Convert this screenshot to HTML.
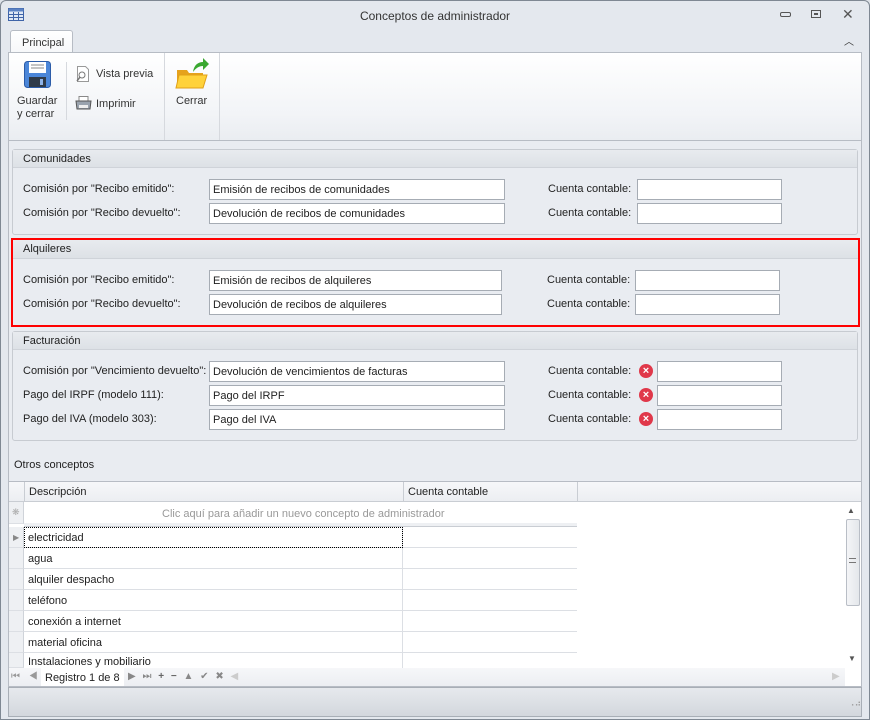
<!DOCTYPE html><html><head><meta charset="utf-8"><style>
*{margin:0;padding:0;box-sizing:border-box}
body{width:870px;height:720px;background:#dfe3e9;font-family:"Liberation Sans",sans-serif;font-size:11px;color:#1e1e1e;position:relative;overflow:hidden}
.a{position:absolute}
.win{left:0;top:0;width:870px;height:720px;border:1px solid #7f8893;border-radius:6px 6px 0 0;background:#e4e8ee}
.inp{position:absolute;height:21px;background:#fff;border:1px solid #a6acb4;padding:4px 0 0 3px;white-space:nowrap}
.lbl{position:absolute;white-space:nowrap;color:#222}
.grp{position:absolute;border:1px solid #c7cbd1;border-radius:3px;background:#e9ecf1}
.gh{position:absolute;left:0;right:0;top:0;height:18px;background:linear-gradient(#e8ebef,#dde1e6);border-bottom:1px solid #cfd3d9;padding:3px 0 0 10px}
.err{position:absolute;width:14px;height:14px;border-radius:50%;background:#e0384a;color:#fff;font-size:11px;line-height:14px;text-align:center;font-weight:bold}
.row{position:absolute;left:24px;width:553px;height:21px;border-bottom:1px solid #dcdfe4;background:#fff}
.row span{position:absolute;left:4px;top:5px}
.row i{position:absolute;left:378px;top:0;bottom:0;border-left:1px solid #dcdfe4}
.ind{position:absolute;left:9px;width:15px;height:21px;border-bottom:1px solid #dcdfe4;border-right:1px solid #cfd3d9;background:#eef0f3}
</style></head><body>
<div class="a win"></div>
<svg class="a" style="left:8px;top:8px" width="16" height="13"><rect x="0.5" y="0.5" width="15" height="12" fill="#dfe8f5" stroke="#3f64a8"/><rect x="0.5" y="0.5" width="15" height="3" fill="#5b82c4"/><path d="M5.5 4v9M10.5 4v9M1 6.5h14M1 9.5h14" stroke="#3f64a8"/></svg>
<div class="a" style="left:0;width:870px;top:9px;text-align:center;color:#333;font-size:12px">Conceptos de administrador</div>
<div class="a" style="left:780px;top:12px;width:11px;height:5px;border:1px solid #555;border-radius:2px"></div>
<div class="a" style="left:811px;top:10px;width:10px;height:8px;border:1px solid #555"></div>
<div class="a" style="left:814px;top:13px;width:4px;height:2px;border:1px solid #555"></div>
<div class="a" style="left:842px;top:6px;font-size:14px;color:#555">✕</div>
<div class="a" style="left:844px;top:33px;font-size:10px;color:#333">︿</div>
<div class="a" style="left:10px;top:30px;width:63px;height:23px;background:linear-gradient(#fff,#f6f7f9);border:1px solid #b7bcc4;border-bottom:none;border-radius:3px 3px 0 0;padding:6px 0 0 11px;color:#333">Principal</div>
<div class="a" style="left:8px;top:52px;width:854px;height:89px;background:linear-gradient(#fff,#f2f4f7 70%,#eaedf1);border:1px solid #b7bcc4"></div>
<div class="a" style="left:66px;top:62px;width:1px;height:58px;background:#d6d9de"></div>
<div class="a" style="left:164px;top:53px;width:1px;height:87px;background:#d6d9de"></div>
<div class="a" style="left:219px;top:53px;width:1px;height:87px;background:#d6d9de"></div>
<svg class="a" style="left:24px;top:61px" width="27" height="27"><rect x="0.5" y="0.5" width="26" height="26" rx="3" fill="#4b86d8" stroke="#2c5ca8"/><rect x="5" y="1" width="17" height="11" fill="#fff"/><path d="M7 4h13M7 7h13" stroke="#888"/><rect x="5" y="16" width="17" height="10" fill="#2f3a48"/><rect x="16" y="18" width="3" height="6" fill="#8fb4e8"/></svg>
<div class="a" style="left:17px;top:95px;color:#333;line-height:13px">Guardar<br>y cerrar</div>
<svg class="a" style="left:76px;top:66px" width="14" height="16"><path d="M1.5 .5h8l3 3v12h-11z" fill="#fff" stroke="#999"/><circle cx="6" cy="9" r="3" fill="none" stroke="#777"/><path d="M4 11l-3 4" stroke="#777" stroke-width="1.5"/></svg>
<div class="a" style="left:96px;top:68px;color:#333">Vista previa</div>
<svg class="a" style="left:75px;top:96px" width="17" height="14"><rect x="4" y="0.5" width="9" height="5" fill="#fff" stroke="#888"/><path d="M1 5h15l-1 8H2z" fill="#9aa3ae" stroke="#555"/><rect x="4" y="9" width="9" height="3" fill="#eee"/></svg>
<div class="a" style="left:96px;top:98px;color:#333">Imprimir</div>
<svg class="a" style="left:175px;top:58px" width="34" height="32"><path d="M2 12h10l2 3h14v15H2z" fill="#e6a21c"/><path d="M4 17h28l-4 13H1z" fill="#ffd23a" stroke="#e0a018"/><path d="M18 14c1-7 5-10 10-10V0l6 6-6 6V8c-4 0-7 2-10 6z" fill="#3aa831"/></svg>
<div class="a" style="left:176px;top:95px;color:#333">Cerrar</div>
<div class="a" style="left:8px;top:141px;width:854px;height:546px;background:#e9ecf1;border-left:1px solid #b7bcc4;border-right:1px solid #b7bcc4"></div>
<div class="grp" style="left:12px;top:149px;width:846px;height:86px"><div class="gh">Comunidades</div></div>
<div class="lbl" style="left:23px;top:183px">Comisión por "Recibo emitido":</div>
<div class="inp" style="left:209px;top:179px;width:296px">Emisión de recibos de comunidades</div>
<div class="lbl" style="left:548px;top:183px">Cuenta contable:</div>
<div class="inp" style="left:637px;top:179px;width:145px"></div>
<div class="lbl" style="left:23px;top:207px">Comisión por "Recibo devuelto":</div>
<div class="inp" style="left:209px;top:203px;width:296px">Devolución de recibos de comunidades</div>
<div class="lbl" style="left:548px;top:207px">Cuenta contable:</div>
<div class="inp" style="left:637px;top:203px;width:145px"></div>
<div class="grp" style="left:11px;top:238px;width:849px;height:89px;border:2px solid #f00;border-radius:0"><div class="gh" style="top:0;height:19px">Alquileres</div></div>
<div class="lbl" style="left:23px;top:274px">Comisión por "Recibo emitido":</div>
<div class="inp" style="left:209px;top:270px;width:293px">Emisión de recibos de alquileres</div>
<div class="lbl" style="left:547px;top:274px">Cuenta contable:</div>
<div class="inp" style="left:635px;top:270px;width:145px"></div>
<div class="lbl" style="left:23px;top:298px">Comisión por "Recibo devuelto":</div>
<div class="inp" style="left:209px;top:294px;width:293px">Devolución de recibos de alquileres</div>
<div class="lbl" style="left:547px;top:298px">Cuenta contable:</div>
<div class="inp" style="left:635px;top:294px;width:145px"></div>
<div class="grp" style="left:12px;top:331px;width:846px;height:110px"><div class="gh">Facturación</div></div>
<div class="lbl" style="left:23px;top:365px">Comisión por "Vencimiento devuelto":</div>
<div class="inp" style="left:209px;top:361px;width:296px">Devolución de vencimientos de facturas</div>
<div class="lbl" style="left:548px;top:365px">Cuenta contable:</div>
<div class="err" style="left:639px;top:364px">×</div>
<div class="inp" style="left:657px;top:361px;width:125px"></div>
<div class="lbl" style="left:23px;top:389px">Pago del IRPF (modelo 111):</div>
<div class="inp" style="left:209px;top:385px;width:296px">Pago del IRPF</div>
<div class="lbl" style="left:548px;top:389px">Cuenta contable:</div>
<div class="err" style="left:639px;top:388px">×</div>
<div class="inp" style="left:657px;top:385px;width:125px"></div>
<div class="lbl" style="left:23px;top:413px">Pago del IVA (modelo 303):</div>
<div class="inp" style="left:209px;top:409px;width:296px">Pago del IVA</div>
<div class="lbl" style="left:548px;top:413px">Cuenta contable:</div>
<div class="err" style="left:639px;top:412px">×</div>
<div class="inp" style="left:657px;top:409px;width:125px"></div>
<div class="lbl" style="left:14px;top:459px">Otros conceptos</div>
<div class="a" style="left:8px;top:481px;width:854px;height:206px;background:#fff;border:1px solid #b7bcc4"></div>
<div class="a" style="left:9px;top:482px;width:852px;height:20px;background:linear-gradient(#f6f7f9,#eceef2);border-bottom:1px solid #c9cdd3"></div>
<div class="a" style="left:24px;top:482px;width:1px;height:20px;background:#c9cdd3"></div>
<div class="a" style="left:403px;top:482px;width:1px;height:20px;background:#c9cdd3"></div>
<div class="a" style="left:577px;top:482px;width:1px;height:20px;background:#c9cdd3"></div>
<div class="lbl" style="left:29px;top:486px">Descripción</div>
<div class="lbl" style="left:408px;top:486px">Cuenta contable</div>
<div class="ind" style="top:502px;height:22px;color:#aaa;font-size:9px;padding:5px 0 0 3px">❋</div>
<div class="lbl" style="left:162px;top:508px;color:#999">Clic aquí para añadir un nuevo concepto de administrador</div>
<div class="a" style="left:24px;top:523px;width:553px;height:4px;background:#eef0f3;border-bottom:1px solid #c9cdd3"></div>
<div class="ind" style="top:527px;color:#888;font-size:8px;padding:6px 0 0 4px">▶</div><div class="row" style="top:527px"><span>electricidad</span><i></i><b class="a" style="left:0;top:0;width:379px;height:21px;border:1px dotted #000"></b></div>
<div class="ind" style="top:548px"></div><div class="row" style="top:548px"><span>agua</span><i></i></div>
<div class="ind" style="top:569px"></div><div class="row" style="top:569px"><span>alquiler despacho</span><i></i></div>
<div class="ind" style="top:590px"></div><div class="row" style="top:590px"><span>teléfono</span><i></i></div>
<div class="ind" style="top:611px"></div><div class="row" style="top:611px"><span>conexión a internet</span><i></i></div>
<div class="ind" style="top:632px"></div><div class="row" style="top:632px"><span>material oficina</span><i></i></div>
<div class="ind" style="top:653px;height:15px"></div><div class="row" style="top:653px;height:15px;overflow:hidden;border:none"><span style="top:3px">Instalaciones y mobiliario</span><i></i></div>
<div class="a" style="left:845px;top:502px;width:16px;height:166px;background:#fff"></div>
<div class="a" style="left:847px;top:506px;color:#555;font-size:8px">▲</div>
<div class="a" style="left:846px;top:519px;width:14px;height:87px;border:1px solid #b9bec6;border-radius:2px;background:linear-gradient(90deg,#f4f5f7,#e4e7eb)"></div>
<div class="a" style="left:849px;top:558px;width:7px;height:5px;border-top:1px solid #777;border-bottom:1px solid #777"></div>
<div class="a" style="left:848px;top:654px;color:#555;font-size:8px">▼</div>
<div class="a" style="left:9px;top:668px;width:836px;height:18px;background:linear-gradient(#f6f7f9,#eceef2)"></div>
<div class="a" style="left:41px;top:668px;width:83px;height:18px;background:#fff"></div>
<div class="a" style="left:11px;top:671px;color:#999;font-size:10px;letter-spacing:3px">⏮ ◀</div>
<div class="lbl" style="left:45px;top:672px">Registro 1 de 8</div>
<div class="a" style="left:128px;top:671px;color:#888;font-size:10px;white-space:nowrap;letter-spacing:2px">▶ ⏭ <b style="color:#666">+ −</b> ▲ ✔ ✖ <span style="color:#ccc">◀</span></div>
<div class="a" style="left:832px;top:671px;color:#ccc;font-size:10px">▶</div>
<div class="a" style="left:8px;top:687px;width:854px;height:30px;background:linear-gradient(#e6e9ed,#d3d7dd);border:1px solid #a8aeb6"></div>
<div class="a" style="left:848px;top:698px;color:#999;font-size:9px">⠠⠴</div>
</body></html>
